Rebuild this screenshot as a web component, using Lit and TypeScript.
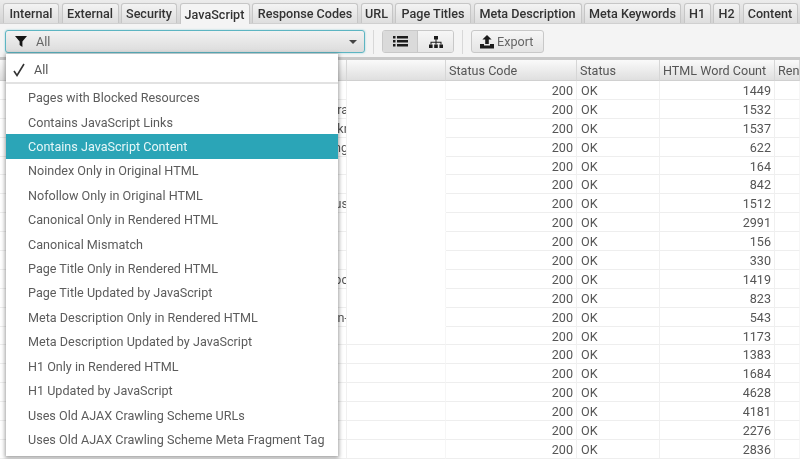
import { LitElement, html, css, svg } from 'lit';
import { customElement } from 'lit/decorators.js';
import { classMap } from 'lit/directives/class-map.js';

const TABS = [
  { name: 'Internal', width: 56 },
  { name: 'External', width: 57 },
  { name: 'Security', width: 56 },
  { name: 'JavaScript', width: 70, active: true },
  { name: 'Response Codes', width: 106 },
  { name: 'URL', width: 32 },
  { name: 'Page Titles', width: 76 },
  { name: 'Meta Description', width: 108 },
  { name: 'Meta Keywords', width: 97 },
  { name: 'H1', width: 27 },
  { name: 'H2', width: 27 },
  { name: 'Content', width: 55 },
];

const OPTIONS = [
  'Pages with Blocked Resources',
  'Contains JavaScript Links',
  'Contains JavaScript Content',
  'Noindex Only in Original HTML',
  'Nofollow Only in Original HTML',
  'Canonical Only in Rendered HTML',
  'Canonical Mismatch',
  'Page Title Only in Rendered HTML',
  'Page Title Updated by JavaScript',
  'Meta Description Only in Rendered HTML',
  'Meta Description Updated by JavaScript',
  'H1 Only in Rendered HTML',
  'H1 Updated by JavaScript',
  'Uses Old AJAX Crawling Scheme URLs',
  'Uses Old AJAX Crawling Scheme Meta Fragment Tag',
];

const WORDS = [1449, 1532, 1537, 622, 164, 842, 1512, 2991, 156, 330, 1419, 823, 543, 1173, 1383, 1684, 4628, 4181, 2276, 2836];

// only the ends of the long addresses stick out from under the menu
const FRAGMENTS: Record<number, string> = { 1: 'ra', 2: 'kr', 3: 'ng', 6: 'us', 10: 'pc', 12: 'en-' };

const filterIcon = svg`<path d="M0 0h12L7.4 5.4V11L4.6 9V5.4z" fill="#151515"/>`;
const listIcon = svg`<path d="M0 0h2.5v2.5H0zM4 0h11v2.5H4zM0 4h2.5v2.5H0zM4 4h11v2.5H4zM0 8h2.5v2.5H0zM4 8h11v2.5H4z" fill="#1c1c1c"/>`;
const treeIcon = svg`<path d="M6 0h4v3.6H6zM7.5 3.6h1v2.2h5v2.4h-1V6.8H8.5v1.4h-1V6.8H3.5v1.4h-1V5.8h5z M1 8.4h3.6V12H1zM6.2 8.4h3.6V12H6.2zM11.4 8.4H15V12h-3.600z" fill="#1c1c1c"/>`;
const exportIcon = svg`<path d="M7 0l4.600 4.600H8.800V9H5.200V4.600H2.400z" fill="#1c1c1c"/><path d="M0 9h4v1.400h6V9h4v4.400H0z" fill="#1c1c1c"/>`;

@customElement('app-root')
export class AppRoot extends LitElement {
  static styles = css`
    :host {
      display: block;
      position: relative;
      width: 800px;
      height: 459px;
      overflow: hidden;
      background: #fff;
      font-family: Roboto, 'Liberation Sans', sans-serif;
      font-size: 12.600px;
      color: #555;
      filter: blur(0.350px);
    }

    * {
      box-sizing: border-box;
    }

    .tabs {
      display: flex;
      gap: 2.500px;
      height: 24px;
      padding: 3px 0 0 3px;
      background: linear-gradient(#ececec, #d4d4d4);
      border-bottom: 1px solid #d0d0d0;
    }

    .tab {
      flex: none;
      display: flex;
      align-items: center;
      justify-content: center;
      height: 20px;
      font-weight: 500;
      color: #333;
      background: linear-gradient(#f3f3f3, #dedede);
      border: 1px solid #c6c6c6;
      border-bottom: none;
      border-radius: 3px 3px 0 0;
      white-space: nowrap;
    }

    .tab.active {
      height: 21px;
      background: #f4f4f4;
    }

    .toolbar {
      display: flex;
      align-items: center;
      height: 36px;
      padding: 2px 5px 0;
      background: #f4f4f4;
      border-bottom: 3px solid #c9c9c9;
    }

    .combo {
      flex: none;
      display: flex;
      align-items: center;
      width: 360px;
      height: 23px;
      padding: 0 7px 0 9px;
      color: #666;
      background: linear-gradient(#f2f2f2, #dcdcdc);
      border: 1px solid #5db5c2;
      border-radius: 3px;
      box-shadow: 0 0 2px #8fcbd4;
    }

    .combo .label {
      flex: 1;
      margin-left: 9px;
    }

    .caret {
      width: 0;
      height: 0;
      border-left: 4.500px solid transparent;
      border-right: 4.500px solid transparent;
      border-top: 4px solid #444;
    }

    .sep {
      flex: none;
      width: 1px;
      height: 24px;
      margin: 0 8px;
      background: #d8d8d8;
    }

    .group {
      flex: none;
      display: flex;
      height: 23px;
      border: 1px solid #c8c8c8;
      border-radius: 3px;
      overflow: hidden;
    }

    .group div {
      display: flex;
      align-items: center;
      justify-content: center;
      background: linear-gradient(#f6f6f6, #e6e6e6);
    }

    .group .selected {
      width: 35px;
      background: #dadada;
      border-right: 1px solid #c8c8c8;
    }

    .group .plain {
      width: 35px;
    }

    .export {
      flex: none;
      display: flex;
      align-items: center;
      gap: 3px;
      width: 73px;
      height: 23px;
      padding-left: 8px;
      color: #666;
      background: linear-gradient(#f6f6f6, #e4e4e4);
      border: 1px solid #c8c8c8;
      border-radius: 3px;
    }

    .grid {
      display: grid;
      grid-template-columns: 347px 99px 131px 83px 115px 25px;
      grid-template-rows: 21px;
      grid-auto-rows: 18.900px;
    }

    .head {
      display: flex;
      align-items: center;
      padding-left: 3px;
      white-space: nowrap;
      overflow: hidden;
      background: linear-gradient(#fafafa, #dfdfdf);
      border-right: 1px solid #d6d6d6;
      border-bottom: 1px solid #d0d0d0;
    }

    .cell {
      display: flex;
      align-items: center;
      padding: 1px 3px 0 4px;
      color: #555;
      white-space: nowrap;
      overflow: hidden;
      border-right: 1px solid #f0f0f0;
      border-bottom: 1px solid #eeeeee;
    }

    .num {
      justify-content: flex-end;
    }

    .blank {
      border-right-color: #f6f6f6;
    }

    .masked {
      border-bottom-color: transparent;
    }

    .frag {
      padding-right: 0;
    }

    .frag span {
      margin-right: -2px;
    }

    .menu {
      position: absolute;
      left: 6px;
      top: 54px;
      width: 332px;
      height: 402px;
      padding-top: 3px;
      background: #fff;
      box-shadow: 0 1px 4px 1px rgba(0, 0, 0, 0.38);
    }

    .current {
      display: flex;
      align-items: center;
      height: 27px;
      margin-bottom: 1.400px;
      padding-left: 6px;
      color: #555;
      border-bottom: 2px solid #e2e2e2;
    }

    .current svg {
      margin-right: 6px;
    }

    .option {
      display: flex;
      align-items: center;
      height: 24.430px;
      padding-left: 22px;
      color: #5c5c5c;
      white-space: nowrap;
    }

    .option.hit {
      color: #e6f7f8;
      background: #2ba5b7;
    }
  `;

  render() {
    return html`
      <div class="tabs">
        ${TABS.map(
          (t) => html`<div class=${classMap({ tab: true, active: !!t.active })} style="width:${t.width}px">${t.name}</div>`
        )}
      </div>

      <div class="toolbar">
        <div class="combo">
          <svg width="12" height="11" viewBox="0 0 12 11">${filterIcon}</svg>
          <span class="label">All</span>
          <span class="caret"></span>
        </div>
        <div class="sep"></div>
        <div class="group">
          <div class="selected"><svg width="15" height="11" viewBox="0 0 15 11">${listIcon}</svg></div>
          <div class="plain"><svg width="16" height="12" viewBox="0 0 16 12">${treeIcon}</svg></div>
        </div>
        <div class="sep"></div>
        <div class="export">
          <svg width="14" height="14" viewBox="0 0 14 14">${exportIcon}</svg>
          Export
        </div>
      </div>

      <div class="grid">
        <div class="head"></div>
        <div class="head"></div>
        <div class="head">Status Code</div>
        <div class="head">Status</div>
        <div class="head">HTML Word Count</div>
        <div class="head">Ren</div>
        ${WORDS.map(
          (count, i) => html`
            <div class="cell num frag"><span>${FRAGMENTS[i] ?? ''}</span></div>
            <div class=${classMap({ cell: true, blank: true, masked: i < 13 })}></div>
            <div class="cell num">200</div>
            <div class="cell">OK</div>
            <div class="cell num">${count}</div>
            <div class="cell blank"></div>
          `
        )}
      </div>

      <div class="menu">
        <div class="current">
          <svg width="16" height="14" viewBox="0 0 16 14">
            <path d="M2 8l3 4.500L12 1" fill="none" stroke="#333" stroke-width="1.600"/>
          </svg>
          All
        </div>
        ${OPTIONS.map(
          (o) => html`<div class=${classMap({ option: true, hit: o === 'Contains JavaScript Content' })}>${o}</div>`
        )}
      </div>
    `;
  }
}
